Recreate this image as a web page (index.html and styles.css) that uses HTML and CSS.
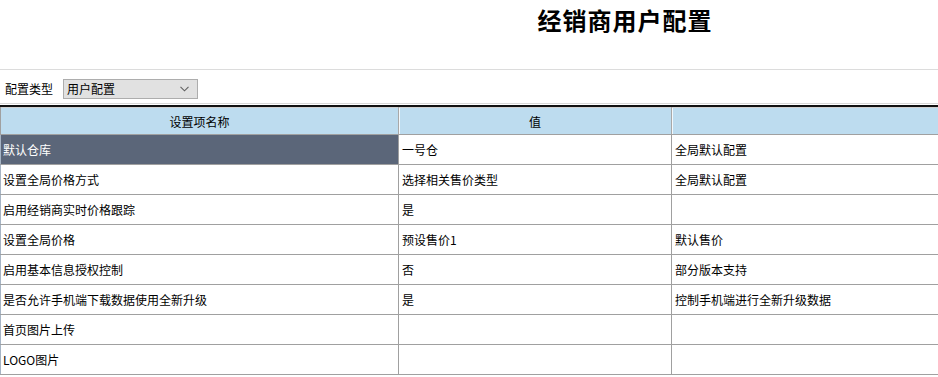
FILE: index.html
```html
<!DOCTYPE html>
<html lang="zh-CN">
<head>
<meta charset="utf-8">
<title>经销商用户配置</title>
<link rel="stylesheet" href="styles.css">
</head>
<body>
<header class="page-head">
  <h1 class="title">经销商用户配置</h1>
</header>
<div class="toolbar">
  <span class="tb-label">配置类型</span>
  <div class="select">
    <span class="select-text">用户配置</span>
    <svg class="chev" width="9" height="6" viewBox="0 0 9 6"><path d="M0.5 0.8 L4.5 4.8 L8.5 0.8" fill="none" stroke="#606060" stroke-width="1.1"/></svg>
  </div>
</div>
<div class="grid-wrap">
  <table class="grid">
    <colgroup><col class="c1"><col class="c2"><col class="c3"></colgroup>
    <thead>
      <tr><th>设置项名称</th><th>值</th><th></th></tr>
    </thead>
    <tbody>
      <tr><td class="sel">默认仓库</td><td>一号仓</td><td>全局默认配置</td></tr>
      <tr><td>设置全局价格方式</td><td>选择相关售价类型</td><td>全局默认配置</td></tr>
      <tr><td>启用经销商实时价格跟踪</td><td>是</td><td></td></tr>
      <tr><td>设置全局价格</td><td>预设售价1</td><td>默认售价</td></tr>
      <tr><td>启用基本信息授权控制</td><td>否</td><td>部分版本支持</td></tr>
      <tr><td>是否允许手机端下载数据使用全新升级</td><td>是</td><td>控制手机端进行全新升级数据</td></tr>
      <tr><td>首页图片上传</td><td></td><td></td></tr>
      <tr><td>LOGO图片</td><td></td><td></td></tr>
    </tbody>
  </table>
</div>
</body>
</html>
```
FILE: styles.css
```css
html, body {
  margin: 0;
  padding: 0;
  background: #ffffff;
  font-family: "Noto Sans CJK SC", "Liberation Sans", sans-serif;
  font-size: 12px;
  color: #000;
  overflow: hidden;
}
.page-head {
  height: 69px;
  border-bottom: 1px solid #dcdcdc;
  box-sizing: content-box;
}
.title {
  margin: 0;
  padding: 5px 0 0 312px;
  text-align: center;
  font-size: 24px;
  line-height: 30px;
  font-weight: bold;
  letter-spacing: 1px;
}
.toolbar {
  display: flex;
  align-items: flex-start;
  height: 34px;
  padding: 9px 0 0 5px;
  border-bottom: 1px solid #d8d8d8;
  box-sizing: border-box;
}
.tb-label {
  width: 58px;
  line-height: 16px;
  padding-top: 2px;
}
.select {
  display: flex;
  align-items: center;
  justify-content: space-between;
  width: 135px;
  height: 20px;
  box-sizing: border-box;
  border: 1px solid #adadad;
  background: #e1e1e1;
  padding: 0 8px 0 3px;
}
.select-text {
  line-height: 16px;
}
.grid-wrap {
  margin-top: 1px;
  border-top: 2px solid #111;
}
.grid {
  border-collapse: collapse;
  table-layout: fixed;
  width: 938px;
  border-top: 1px solid #d0d0d0;
}
.c1 { width: 398px; }
.c2 { width: 273px; }
.c3 { width: 267px; }
.grid th {
  height: 26px;
  padding: 0;
  background: #bddcef;
  font-weight: normal;
  text-align: center;
  border-bottom: 1px solid #a0a0a0;
  border-right: 1px solid #a8a8a8;
  box-shadow: inset 1px 0 0 #f2f8fc;
}
.grid th:first-child {
  border-left: 1px solid #a0a0a0;
  box-shadow: none;
}
.grid td {
  height: 29px;
  padding: 0 0 0 3px;
  border-bottom: 1px solid #a0a0a0;
  border-right: 1px solid #a0a0a0;
  white-space: nowrap;
  overflow: hidden;
  line-height: 16px;
}
.grid td:first-child {
  border-left: 1px solid #a6b4c4;
  padding-left: 2px;
}
.grid td.sel {
  background: #5b6679;
  color: #ffffff;
}
```
